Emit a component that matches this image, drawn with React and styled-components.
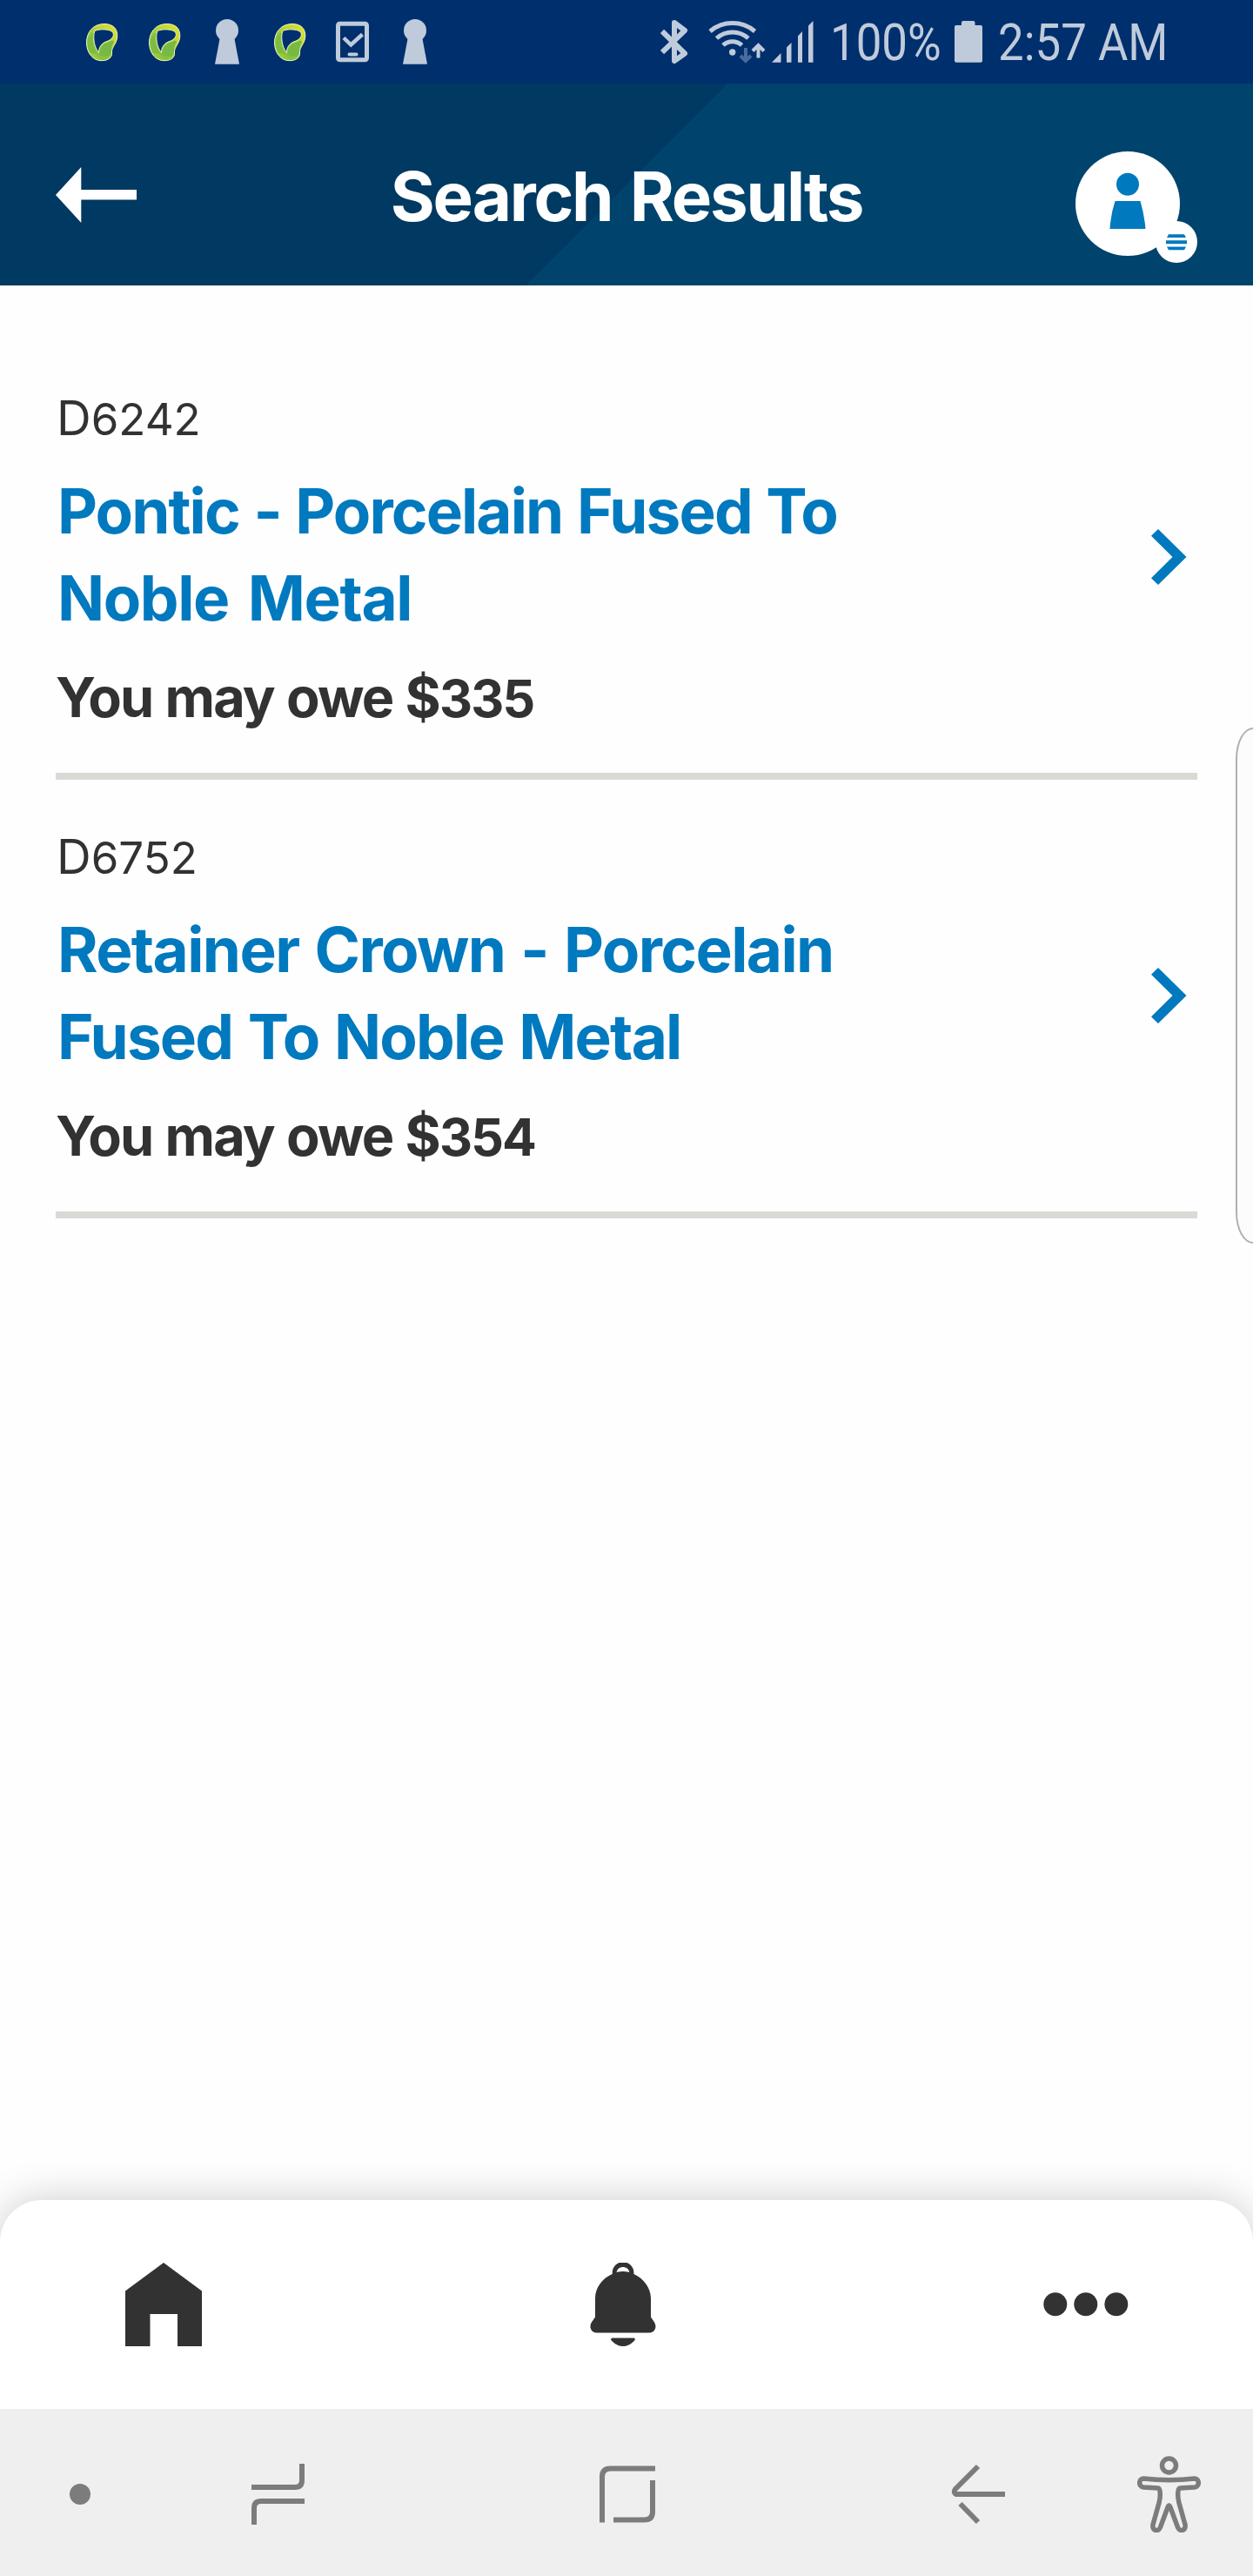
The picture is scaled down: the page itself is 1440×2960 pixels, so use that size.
import React from "react";
import styled, { createGlobalStyle } from "styled-components";

const blue = "#0079bf";
const ink = "#323232";
const statusInk = "#bfcbdb";
const navInk = "#7c7c7c";

const GlobalStyle = createGlobalStyle`
  *, *::before, *::after { box-sizing: border-box; }
  body { margin: 0; background: #fefefe; font-family: Inter, "Liberation Sans", sans-serif; }
  svg { display: block; flex: none; }
  button { border: 0; padding: 0; background: none; font: inherit; color: inherit; }
`;

const Screen = styled.div`
  position: relative;
  display: flex;
  flex-direction: column;
  width: 1440px;
  height: 2960px;
  overflow: hidden;
  background: #fefefe;
`;

const StatusBar = styled.div`
  display: flex;
  justify-content: space-between;
  height: 96px;
  padding: 0 95px 0 81px;
  background: #002f6d;
  color: ${statusInk};
`;

const Notifications = styled.div`
  display: flex;
`;

const Slot = styled.span`
  display: flex;
  justify-content: center;
  width: 72px;
`;

const Indicators = styled.div`
  display: flex;
`;

const StatusText = styled.span`
  width: ${(p) => p.$width}px;
  font: 400 60px/98px Roboto, "Liberation Sans", sans-serif;
  white-space: nowrap;
  transform: scaleX(0.88);
  transform-origin: left center;
`;

const Header = styled.header`
  display: grid;
  grid-template-columns: 1fr auto 1fr;
  align-items: center;
  height: 232px;
  padding: 27px 64px 0;
  background: linear-gradient(135deg, #003961 50%, #00436d 50%);
`;

const BackButton = styled.button`
  justify-self: start;
  margin-bottom: 3px;
`;

const Heading = styled.h1`
  margin: 0;
  color: #fff;
  font-size: 78px;
  font-weight: 700;
  line-height: 100px;
  letter-spacing: -2.2px;
  word-spacing: 4px;
`;

const ProfileButton = styled.button`
  justify-self: end;
  margin-top: 25px;
`;

const Results = styled.main`
  flex: 1;
  padding: 64px 64px 0;
`;

const Result = styled.article`
  display: flex;
  align-items: center;
  justify-content: space-between;
  padding-right: 12px;
  border-bottom: 8px solid #d9dad5;
`;

const ResultBody = styled.div`
  display: flex;
  flex-direction: column;
  gap: 24px;
  width: 1000px;
  padding: 55px 0 47px;
  color: ${ink};
`;

const Code = styled.div`
  padding-left: 1px;
  font-size: 55px;
  line-height: 66px;
`;

const Digits = styled.span`
  font-size: ${(p) => p.$size}px;
  line-height: 1;
`;

const Name = styled.h2`
  margin: 0;
  padding-left: 2px;
  color: ${blue};
  font-size: 71px;
  font-weight: 700;
  line-height: 100px;
`;

const NameLine = styled.span`
  display: block;
  letter-spacing: ${(p) => p.$spacing}px;
  word-spacing: ${(p) => p.$wordGap}px;
`;

const Owe = styled.div`
  font-size: 63px;
  font-weight: 700;
  line-height: 80px;
  letter-spacing: -1.85px;
  word-spacing: 1px;
`;

const EdgePanel = styled.div`
  position: absolute;
  top: 836px;
  left: 1420px;
  width: 60px;
  height: 593px;
  border: 2px solid #b0b0b0;
  border-radius: 20px 0 0 20px / 36px 0 0 36px;
  background: #fcfcfc;
`;

const TabBar = styled.nav`
  display: flex;
  align-items: center;
  justify-content: space-between;
  height: 240px;
  padding: 0 143px 0 144px;
  border-radius: 48px 48px 0 0;
  background: #fff;
  color: ${ink};
  box-shadow: 0 0 48px rgba(0, 0, 0, 0.2);
`;

const SystemBar = styled.div`
  position: relative;
  display: flex;
  align-items: center;
  height: 192px;
  padding: 4px 0 0;
  background: #efefef;
  color: ${navInk};
`;

const SystemKey = styled.span`
  display: flex;
  margin-left: ${(p) => p.$gap}px;
`;

const Leaf = ({ id }) => (
  <svg width="42" height="96" viewBox="96 0 42 96">
    <defs>
      <linearGradient id={id} x1="0" y1="1" x2="1" y2="0">
        <stop offset="0" stopColor="#c6da35" />
        <stop offset="0.3" stopColor="#84c03f" />
        <stop offset="0.6" stopColor="#b6d433" />
        <stop offset="1" stopColor="#e6e52c" />
      </linearGradient>
    </defs>
    <path
      fillRule="evenodd"
      fill={`url(#${id})`}
      stroke="#eef5d0"
      strokeWidth="1"
      d="M120 27.500C106 27.500 99.500 38 99.500 49C99.500 61 107 70 117 69.700C125 69.500 129 66 128.500 60C128 54 134.800 50 134.800 41C134.800 33 130 27.500 120 27.500ZM108.800 35.500C115 33 124 33.500 128.500 36C133 40 129 46 121.500 48C116 50.500 113.500 55 113.500 60.500C108 54 106.500 43 108.800 35.500Z"
    />
    <path fill="#76b943" d="M126 48C118 50 114.500 55 114.500 63C119 66 127 66 128 60.500C128 56 128 53 131 48C130 46 128 47 126 48Z" />
    <path fill="#7cbd41" d="M106 38C100 44 99.500 53 104 61L112 62C107 55 105.500 46 107.500 38Z" />
  </svg>
);

const Keyhole = () => (
  <svg width="30" height="96" viewBox="246 0 30 96" fill="currentColor">
    <circle cx="261" cy="35" r="13" />
    <path d="M253 42H269L275 73.700H247Z" />
  </svg>
);

const PhoneCheck = () => (
  <svg width="38" height="96" viewBox="386 0 38 96" fill="none" stroke="currentColor">
    <rect x="388.500" y="27.200" width="33" height="41.500" rx="2" strokeWidth="5" />
    <path d="M395 43.500L403.300 51.500L416.500 39.500" strokeWidth="4.500" />
    <path d="M401.500 62.500H409.500" strokeWidth="4" strokeLinecap="round" />
  </svg>
);

const Bluetooth = () => (
  <svg width="55" height="96" viewBox="759 0 55 96" fill="none" stroke="currentColor" strokeWidth="6" strokeLinejoin="round">
    <path d="M761 36L787 61.500L775 70V26L787 35L761 60" />
  </svg>
);

const Wifi = () => (
  <svg width="73" height="96" viewBox="814 0 73 96" fill="none" stroke="currentColor" strokeWidth="5">
    <path d="M816 36A40 40 0 0 1 867.500 36" />
    <path d="M823.500 44A27 27 0 0 1 860 44" />
    <path d="M831 52A15.500 15.500 0 0 1 852.500 52" />
    <circle cx="841.700" cy="60" r="3.700" fill="currentColor" stroke="none" />
    <path d="M857 55V69M851 64L857 70L863 64" stroke="#4a6c9b" strokeWidth="4" />
    <path d="M871.500 66.500V54M865 58.500L871.500 52L878 58.500" strokeWidth="4" />
  </svg>
);

const Signal = () => (
  <svg width="67" height="96" viewBox="887 0 67 96" fill="currentColor">
    <path d="M887 71.700L897.500 61V71.700ZM904 71.700V54.500L909.500 49V71.700ZM917 71.700V41.500L922 36V71.700ZM929 71.700V29.500L934.500 24V71.700Z" />
  </svg>
);

const Battery = () => (
  <svg width="50" height="96" viewBox="1097 0 50 96" fill="currentColor">
    <rect x="1097" y="29" width="32" height="42.700" rx="2" />
    <rect x="1105" y="24" width="15.500" height="8" rx="2" />
  </svg>
);

const BackArrow = () => (
  <svg width="93" height="64" viewBox="64 192 93 64" fill="#fff">
    <path d="M64 224L93.300 192V218H157V229.500H93.300V256Z" />
  </svg>
);

const Profile = () => (
  <svg width="140" height="128" viewBox="1236 174 140 128">
    <circle cx="1296" cy="234" r="60" fill="#fff" />
    <circle cx="1296" cy="211.700" r="13" fill={blue} />
    <path fill={blue} d="M1281.500 231H1310.500Q1315 246 1316.500 263H1275.500Q1276.500 246 1281.500 231Z" />
    <circle cx="1352" cy="278" r="24" fill="#fff" />
    <path
      fill={blue}
      d="M1343 269.300H1361L1363 273H1341ZM1340 276.300H1364V280.300H1340ZM1341 283.500H1363L1361 287.200H1343Z"
    />
  </svg>
);

const Chevron = () => (
  <svg width="41" height="64" viewBox="0 0 41 64" fill={blue}>
    <path d="M8 0L40.500 32L8 64L0 56.200L24.500 32L0 7.800Z" />
  </svg>
);

const Home = () => (
  <svg width="88" height="96" viewBox="0 0 88 96" fill="currentColor">
    <path d="M44 0L88 32.500V96H60V59H28.500V96H0V32.500Z" />
  </svg>
);

const Bell = () => (
  <svg width="76" height="96" viewBox="678.300 2600 76 96" fill="currentColor">
    <path
      fillRule="evenodd"
      d="M704 2613V2611.500A12.300 12.300 0 0 1 728.700 2611.500V2613C740 2618 748.300 2629 748.300 2641V2662.500L752 2668C756 2674 752.500 2680.500 747 2680.500H685.500C680 2680.500 676.500 2674 680.500 2668L684.300 2662.500V2641C684.300 2629 692 2618 704 2613ZM709 2611Q716.300 2609.200 723.600 2611C722.500 2603 710 2603 709 2611Z"
    />
    <path d="M704 2686.500H728.700Q731.500 2687.500 729 2690Q723 2696 716.300 2696Q709.500 2696 703.500 2690Q701 2687.500 704 2686.500Z" />
  </svg>
);

const More = () => (
  <svg width="98" height="96" viewBox="0 0 98 96" fill="currentColor">
    <circle cx="13.800" cy="47.700" r="13.500" />
    <circle cx="48.800" cy="47.700" r="13.500" />
    <circle cx="83.800" cy="47.700" r="13.500" />
  </svg>
);

const Dot = () => (
  <svg width="24" height="88" viewBox="0 0 24 88" fill="currentColor">
    <circle cx="12" cy="44" r="12" />
  </svg>
);

const Recents = () => (
  <svg width="64" height="88" viewBox="288 2822 64 88" fill="none" stroke="currentColor" strokeWidth="6">
    <path d="M347 2831V2850Q347 2858 339 2858H289M350 2874H300Q292 2874 292 2882V2901" />
  </svg>
);

const HomeSquare = () => (
  <svg width="66" height="88" viewBox="688 2822 66 88" fill="none" stroke="currentColor" strokeWidth="6">
    <path d="M692 2898.500V2846Q692 2836.500 701.500 2836.500H753M750 2850V2886Q750 2895.500 740.500 2895.500H705" />
  </svg>
);

const SystemBack = () => (
  <svg width="64" height="88" viewBox="1092 2822 64 88" fill="none" stroke="currentColor" strokeWidth="6" strokeLinejoin="round">
    <path d="M1155 2866H1099Q1095 2864 1098 2860L1124 2834M1103.500 2877L1124 2898" />
  </svg>
);

const Accessibility = () => (
  <svg width="74" height="88" viewBox="1306 2822 74 88" fill="none" stroke="currentColor" strokeWidth="5.500" strokeLinejoin="round">
    <circle cx="1343.500" cy="2833" r="8" />
    <path d="M1314 2848Q1343.500 2851.500 1373 2848C1378.500 2848 1379 2857.500 1373 2858L1356 2859Q1354 2859 1353.700 2865Q1353.500 2870 1355 2876L1362 2901C1363 2908 1356 2910 1353.500 2904L1345 2881Q1343.500 2877 1342 2881L1333.500 2904C1331 2910 1324 2908 1325 2901L1332 2876Q1333.500 2870 1333.300 2865Q1333 2859 1331 2859L1314 2858C1308 2857.500 1308.500 2848 1314 2848Z" />
  </svg>
);

const results = [
  {
    code: "6242",
    name: [
      { text: "Pontic - Porcelain Fused To", spacing: -1.9, wordGap: 1.7 },
      { text: "Noble Metal", spacing: -1.4, wordGap: 6.5 },
    ],
    cost: "335",
  },
  {
    code: "6752",
    name: [
      { text: "Retainer Crown - Porcelain", spacing: -1.6, wordGap: 2.8 },
      { text: "Fused To Noble Metal", spacing: -1.8, wordGap: 2.4 },
    ],
    cost: "354",
  },
];

export default function App() {
  return (
    <Screen>
      <GlobalStyle />
      <StatusBar>
        <Notifications>
          <Slot><Leaf id="leaf-a" /></Slot>
          <Slot><Leaf id="leaf-b" /></Slot>
          <Slot><Keyhole /></Slot>
          <Slot><Leaf id="leaf-c" /></Slot>
          <Slot><PhoneCheck /></Slot>
          <Slot><Keyhole /></Slot>
        </Notifications>
        <Indicators>
          <Bluetooth />
          <Wifi />
          <Signal />
          <StatusText $width={143}>100%</StatusText>
          <Battery />
          <StatusText $width={198}>2:57 AM</StatusText>
        </Indicators>
      </StatusBar>
      <Header>
        <BackButton aria-label="Back"><BackArrow /></BackButton>
        <Heading>Search Results</Heading>
        <ProfileButton aria-label="Profile"><Profile /></ProfileButton>
      </Header>
      <Results>
        {results.map((r) => (
          <Result key={r.code}>
            <ResultBody>
              <Code>D<Digits $size={51}>{r.code}</Digits></Code>
              <Name>
                {r.name.map((line) => (
                  <NameLine key={line.text} $spacing={line.spacing} $wordGap={line.wordGap}>{line.text} </NameLine>
                ))}
              </Name>
              <Owe>You may owe $<Digits $size={59}>{r.cost}</Digits></Owe>
            </ResultBody>
            <Chevron />
          </Result>
        ))}
      </Results>
      <TabBar>
        <Home />
        <Bell />
        <More />
      </TabBar>
      <SystemBar>
        <SystemKey $gap={80}><Dot /></SystemKey>
        <SystemKey $gap={184}><Recents /></SystemKey>
        <SystemKey $gap={336}><HomeSquare /></SystemKey>
        <SystemKey $gap={338}><SystemBack /></SystemKey>
        <SystemKey $gap={150}><Accessibility /></SystemKey>
      </SystemBar>
      <EdgePanel />
    </Screen>
  );
}
